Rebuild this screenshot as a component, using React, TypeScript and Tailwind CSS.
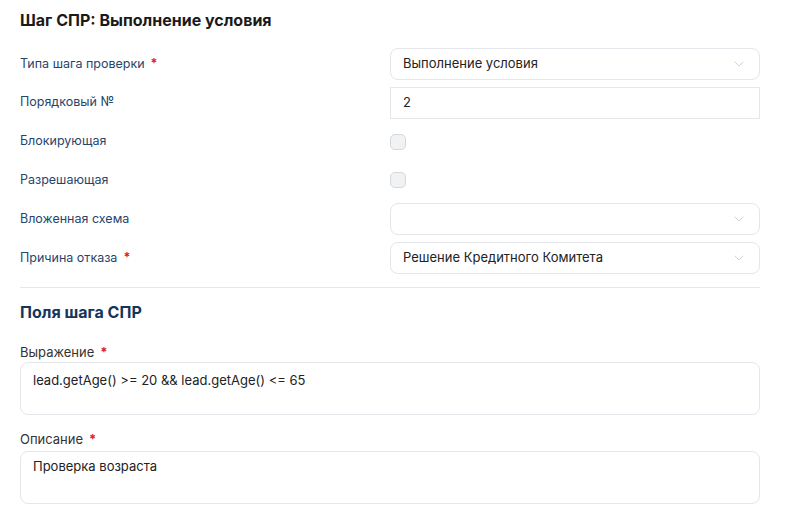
import { ChevronDown } from 'lucide-react';

const font = { fontFamily: 'Inter, "Noto Sans", sans-serif' };

function Req() {
    return <span className="ml-1.5 text-[#e11d1d] font-bold">*</span>;
}

function Select({ value }: { value?: string }) {
    return (
        <div className="h-8 flex items-center justify-between rounded-lg border border-[#e4e6eb] bg-white pl-[12px] pr-3 text-[13px] text-[#222]">
            <span>{value}</span>
            <ChevronDown className="w-4 h-4 text-[#c4c8ce]" strokeWidth={1.2} />
        </div>
    );
}

function Checkbox() {
    return <div className="w-4 h-4 rounded-[5px] border border-[#d5d8dd] bg-[#f1f2f4]" />;
}

export default function App() {
    const rows: { label: string; required?: boolean; control: React.ReactNode }[] = [
        { label: 'Типа шага проверки', required: true, control: <Select value="Выполнение условия" /> },
        {
            label: 'Порядковый №',
            control: (
                <div className="h-8 flex items-center border border-[#e4e6eb] bg-white pl-[12px] text-[13px] text-[#222]">2</div>
            ),
        },
        { label: 'Блокирующая', control: <Checkbox /> },
        { label: 'Разрешающая', control: <Checkbox /> },
        { label: 'Вложенная схема', control: <Select /> },
        { label: 'Причина отказа', required: true, control: <Select value="Решение Кредитного Комитета" /> },
    ];

    return (
        <div className="w-[787px] h-[530px] bg-white overflow-hidden" style={font}>
            <div className="w-[740px] ml-5 pt-[10px]">
                <h1 className="text-[16px] leading-5 font-bold text-[#1a1a1a]">Шаг СПР: Выполнение условия</h1>

                {/* Step params */}
                <div className="mt-[18px] flex flex-col gap-[6.8px]">
                    {rows.map((r) => (
                        <div key={r.label} className="grid grid-cols-2 h-8 items-center">
                            <div className="text-[12.5px] text-[#27456b]">
                                {r.label}
                                {r.required && <Req />}
                            </div>
                            <div>{r.control}</div>
                        </div>
                    ))}
                </div>

                <div className="mt-[13px] border-t border-[#e6e8ec]" />

                <h2 className="mt-[14px] text-[16px] leading-5 font-bold text-[#15355b]">Поля шага СПР</h2>

                {/* Fields */}
                <div className="mt-[22px] text-[13px] text-[#333] leading-4">
                    Выражение
                    <Req />
                </div>
                <div className="mt-[2px] h-[53px] rounded-lg border border-[#e4e6eb] px-3 pt-[8px] text-[13px] text-[#222]">
                    lead.getAge() &gt;= 20 &amp;&amp; lead.getAge() &lt;= 65
                </div>

                <div className="mt-[16px] text-[13px] text-[#333] leading-4">
                    Описание
                    <Req />
                </div>
                <div className="mt-[4px] h-[53px] rounded-lg border border-[#e4e6eb] px-3 pt-[5px] text-[13px] text-[#222]">
                    Проверка возраста
                </div>
            </div>
        </div>
    );
}
